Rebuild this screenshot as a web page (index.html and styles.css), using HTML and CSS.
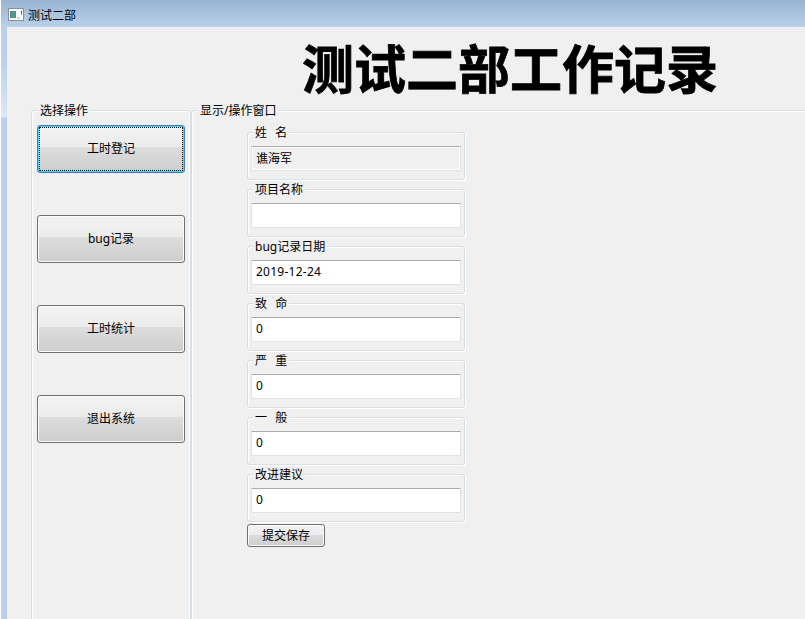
FILE: index.html
```html
<!DOCTYPE html>
<html lang="zh-CN">
<head>
<meta charset="utf-8">
<title>测试二部</title>
<link rel="stylesheet" href="styles.css">
</head>
<body>
<div class="window">
  <header class="titlebar">
    <svg class="app-icon" width="16" height="14" viewBox="0 0 16 14">
      <rect x="0.5" y="0.5" width="15" height="12" fill="#fafafa" stroke="#8a8f96"/>
      <rect x="2" y="3" width="6" height="7" fill="#5c83ad"/>
      <rect x="3" y="4" width="4" height="6" fill="#4b9c80"/>
      <rect x="9" y="3" width="3" height="6" fill="#fff"/>
      <rect x="13" y="3" width="1" height="2" fill="#284c91"/>
      <rect x="13" y="5" width="1" height="2" fill="#58a56b"/>
      <rect x="9" y="9" width="3" height="2" fill="#d4d4d4"/>
    </svg>
    <span class="caption">测试二部</span>
  </header>
  <main class="client">
    <h1>测试二部工作记录</h1>
    <div class="panels">
      <section class="group menu">
        <span class="legend">选择操作</span>
        <button class="btn focused">工时登记</button>
        <button class="btn">bug记录</button>
        <button class="btn">工时统计</button>
        <button class="btn">退出系统</button>
      </section>
      <section class="group work">
        <span class="legend">显示/操作窗口</span>
        <div class="form">
          <label class="group field"><span class="legend spaced">姓&nbsp; 名</span><input value="谯海军" readonly></label>
          <label class="group field"><span class="legend">项目名称</span><input value=""></label>
          <label class="group field"><span class="legend">bug记录日期</span><input value="2019-12-24"></label>
          <label class="group field"><span class="legend spaced">致&nbsp; 命</span><input value="0"></label>
          <label class="group field"><span class="legend spaced">严&nbsp; 重</span><input value="0"></label>
          <label class="group field"><span class="legend spaced">一&nbsp; 般</span><input value="0"></label>
          <label class="group field"><span class="legend">改进建议</span><input value="0"></label>
          <button class="btn save">提交保存</button>
        </div>
      </section>
    </div>
  </main>
</div>
</body>
</html>
```
FILE: styles.css
```css
* { box-sizing: border-box; }
body {
  margin: 0;
  font: 12px/16px "Noto Sans", "Noto Sans CJK SC", sans-serif;
  color: #000;
}
.window {
  height: 619px;
  overflow: hidden;
  border-left: 1px solid #fff;
  padding-left: 6px;
  background: linear-gradient(#b9d1ea 0, #b9d1ea 60px, #dce8f5 117px, #b9d1ea 118px);
}
.titlebar {
  height: 27px;
  margin-left: -6px;
  padding: 2px 0 0 7px;
  display: flex;
  align-items: center;
  gap: 4px;
  background: linear-gradient(#99b4d1, #b9d1ea);
}
.caption { padding-top: 2px; }
.client {
  height: 592px;
  background: #f0f0f0;
  display: flex;
  flex-direction: column;
}
h1 {
  margin: 0 0 0 295px;
  height: 83px;
  font: bold 52px/79px "Noto Sans CJK SC", sans-serif;
  -webkit-text-stroke: 0.8px #000;
  white-space: nowrap;
}
.panels {
  flex: 1;
  display: flex;
  padding-left: 24px;
}
.group {
  position: relative;
  display: block;
  border: 1px solid #d5dfe5;
  border-radius: 3px;
}
.legend {
  position: absolute;
  top: -8px;
  left: 5px;
  padding: 0 2px;
  line-height: 15px;
  background: #f0f0f0;
  white-space: pre;
}
.menu .legend, .work .legend { left: 6px; }
.spaced { word-spacing: 1px; }
.menu {
  width: 160px;
  padding: 14px 5px 0;
  display: flex;
  flex-direction: column;
  gap: 42px;
  border-bottom: 0;
  border-radius: 3px 3px 0 0;
  box-shadow: inset 1px 1px 0 #fff, inset -1px 0 0 #fff;
}
.work {
  flex: 1;
  padding: 21px 0 0 55px;
  border-right: 0;
  border-bottom: 0;
  border-radius: 3px 0 0 0;
  box-shadow: inset 1px 1px 0 #fff;
}
.btn {
  height: 48px;
  padding: 0;
  font: inherit;
  color: #000;
  border: 1px solid #707070;
  border-radius: 3px;
  box-shadow: inset 0 0 0 1px #fafafa;
  background: linear-gradient(#f3f3f3 0, #ebebeb 46%, #dddddd 46%, #cdcdcd 100%);
}
.focused {
  position: relative;
  border-color: #3c7fb1;
  box-shadow: inset 0 0 0 1px #48d0f7;
}
.focused::after {
  content: "";
  position: absolute;
  inset: 1px;
  border: 1px dotted #000;
}
.form {
  width: 218px;
  display: flex;
  flex-direction: column;
  gap: 9px;
}
.field {
  height: 48px;
  padding: 13px 3px 0;
  box-shadow: inset 1px 1px 0 #fff, 1px 1px 0 #fff;
}
.work .field .legend { left: 5px; }
.field input {
  display: block;
  width: 210px;
  height: 25px;
  padding: 0 4px 2px;
  font: inherit;
  letter-spacing: 0.25px;
  color: #000;
  outline: 0;
  border: 1px solid #e2e3ea;
  border-top-color: #abadb3;
  border-radius: 1px;
  background: #fff;
}
.field input[readonly] {
  letter-spacing: 0;
  background: #f0f0f0;
  box-shadow: inset 0 0 0 1px #fff;
}
.save {
  width: 78px;
  height: 23px;
  margin-top: -7px;
}
```
